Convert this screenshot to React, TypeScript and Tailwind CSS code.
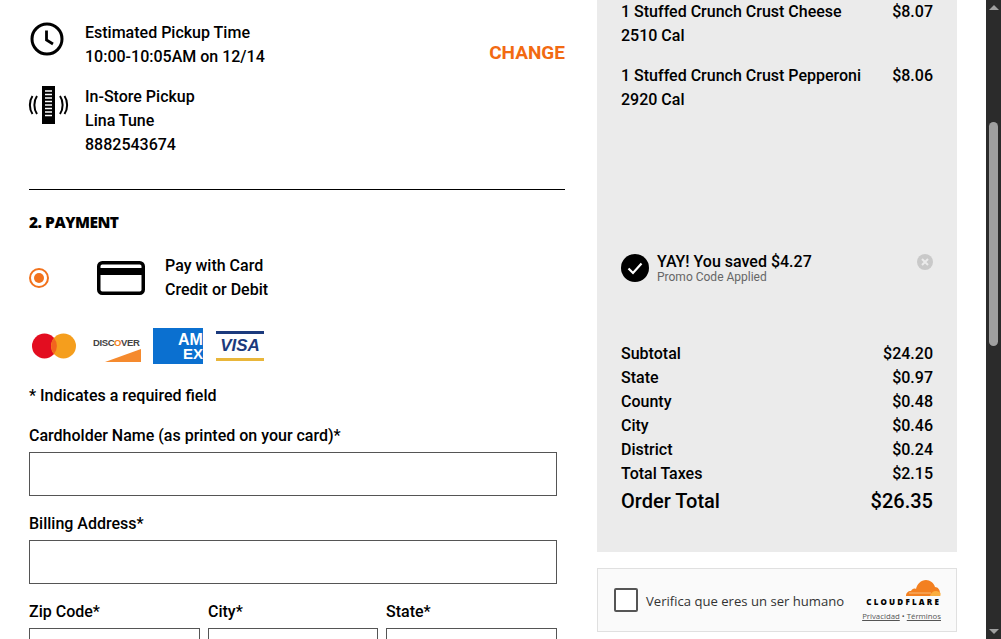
import React from "react";

const Row = ({ label, value }: { label: string; value: string }) => (
  <div className="flex justify-between h-6 leading-6">
    <span>{label}</span>
    <span>{value}</span>
  </div>
);

const Field = ({ label, className }: { label: string; className?: string }) => (
  <div className={className}>
    <div className="h-6 leading-6">{label}</div>
    <div className="mt-1 h-11 border border-[#555] bg-white" />
  </div>
);

const ClockIcon = () => (
  <svg width="36" height="36" viewBox="0 0 36 36" fill="none" stroke="#000" strokeWidth="3">
    <circle cx="18" cy="18" r="15" />
    <path d="M17.5 9.5V19l6.5 4" strokeWidth="2.8" />
  </svg>
);

const PickupIcon = () => (
  <svg width="42" height="40" viewBox="0 0 42 40" fill="none">
    <rect x="14" y="1" width="13" height="38" fill="#000" />
    <path d="M17 6h7M17 9.500h7M17 13h7M17 16.500h7M17 20h7M17 23.500h7M17 27h7M17 30.500h7" stroke="#fff" strokeWidth="1.300" />
    <path d="M9 11c-3.500 5-3.500 13 0 18M4.500 11c-3.500 5-3.500 13 0 18M32 11c3.500 5 3.500 13 0 18M36.500 11c3.500 5 3.500 13 0 18" stroke="#000" strokeWidth="2" />
  </svg>
);

const CardIcon = () => (
  <svg width="48" height="34" viewBox="0 0 48 34" fill="none">
    <rect x="1.750" y="1.750" width="44.500" height="30.500" rx="3.500" stroke="#000" strokeWidth="3.500" />
    <rect x="2" y="7" width="44" height="7" fill="#000" />
  </svg>
);

const Mastercard = () => (
  <svg width="44" height="26" viewBox="0 0 44 26">
    <circle cx="12.500" cy="13" r="12.500" fill="#e30d20" />
    <circle cx="31.500" cy="13" r="12.500" fill="#f59e1d" />
    <path d="M22 5a12.500 12.500 0 0 1 0 16a12.500 12.500 0 0 1 0-16z" fill="#f2641e" />
  </svg>
);

const Discover = () => (
  <div className="w-[48px] h-[36px] relative">
    <span className="absolute left-0 top-[9px] text-[9.500px] leading-[12px] font-bold tracking-[-0.4px] text-[#444] font-['Liberation_Sans',sans-serif]">
      DISC<span className="text-[#f58220]">O</span>VER
    </span>
    <svg className="absolute left-[12px] top-[21px]" width="37" height="13" viewBox="0 0 37 13">
      <path d="M0 13 L36 0 V13 Z" fill="#f58a2e" />
    </svg>
  </div>
);

const Amex = () => (
  <div className="w-[50px] h-[36px] bg-[#0b70d0] overflow-hidden flex flex-col pl-[25px] pt-[5px] font-bold text-white whitespace-nowrap font-['Liberation_Sans',sans-serif]">
    <div className="text-[16px] leading-[14px] h-[14px]">AM</div>
    <div className="text-[15px] leading-[13px] h-[13px] ml-[5px]">EX</div>
  </div>
);

const Visa = () => (
  <div className="w-[48px] flex flex-col h-[30px]">
    <div className="h-1 bg-[#1b3a7d]" />
    <div className="flex-1 flex items-center justify-center text-[17px] italic font-bold text-[#1b3a7d] font-['Liberation_Sans',sans-serif]">
      VISA
    </div>
    <div className="h-[5px] bg-[#e9b63a]" />
  </div>
);

const CloudflareLogo = () => (
  <svg width="36" height="18" viewBox="0 0 36 18">
    <path d="M1 17c0-3 2-5 5-5 1-2 3-3 5-2 1-5 5-9 10-9 4 0 8 3 9 7 3 0 5 3 5 6 0 1 0 2-.3 3z" fill="#f38020" />
    <path d="M25 17c.6-3 3-5 6-5 2 0 3.500 1 4.500 2 .2 1 0 2-.2 3z" fill="#faae40" />
    <path d="M4 14h22" stroke="#fbd29f" strokeWidth=".7" />
  </svg>
);

export default function App() {
  return (
    <div className="h-[639px] w-[1001px] overflow-hidden flex bg-white text-black text-base leading-6 font-['Roboto',sans-serif] font-medium">
      {/* Main form column */}
      <div className="ml-[29px] w-[536px] pt-[21px] shrink-0">
        <div className="flex justify-between">
          <div className="flex">
            <div className="w-[56px]">
              <ClockIcon />
            </div>
            <div>
              <div>Estimated Pickup Time</div>
              <div>10:00-10:05AM on 12/14</div>
            </div>
          </div>
          <div className="text-[#f26a12] text-[19px] leading-6 font-bold self-end -translate-y-1">CHANGE</div>
        </div>

        <div className="flex mt-4">
          <div className="w-[56px] -ml-[1px] mr-[1px]">
            <PickupIcon />
          </div>
          <div>
            <div>In-Store Pickup</div>
            <div>Lina Tune</div>
            <div>8882543674</div>
          </div>
        </div>

        <div className="mt-8 border-t border-black" />

        <div className="mt-[20px] h-6 leading-6 font-['Open_Sans',sans-serif] text-[15.500px] font-extrabold tracking-[-0.5px]">2. PAYMENT</div>

        <div className="flex items-center mt-[20px] h-12">
          <div className="w-5 h-5 rounded-full border-2 border-[#f2721c] flex items-center justify-center">
            <div className="w-[10px] h-[10px] rounded-full bg-[#f2721c]" />
          </div>
          <div className="ml-[48px]">
            <CardIcon />
          </div>
          <div className="ml-[20px]">
            <div>Pay with Card</div>
            <div>Credit or Debit</div>
          </div>
        </div>

        <div className="flex items-center mt-[26px] ml-[3px] h-9">
          <Mastercard />
          <div className="ml-[17px]">
            <Discover />
          </div>
          <div className="ml-[12px]">
            <Amex />
          </div>
          <div className="ml-[13px]">
            <Visa />
          </div>
        </div>

        <div className="mt-[20px] h-6">* Indicates a required field</div>

        <div className="w-[528px]">
          <Field label="Cardholder Name (as printed on your card)*" className="mt-4" />
          <Field label="Billing Address*" className="mt-4" />
          <div className="mt-4 flex gap-2">
            <Field label="Zip Code*" className="w-[171px]" />
            <Field label="City*" className="w-[170px]" />
            <Field label="State*" className="w-[171px]" />
          </div>
        </div>
      </div>

      {/* Order summary column */}
      <div className="ml-[32px] w-[360px] shrink-0">
        <div className="h-[552px] bg-[#ebebeb] px-6 flex flex-col">
          <div className="flex justify-between">
            <div>
              <div>1 Stuffed Crunch Crust Cheese</div>
              <div>2510 Cal</div>
            </div>
            <div>$8.07</div>
          </div>
          <div className="flex justify-between mt-4">
            <div>
              <div>1 Stuffed Crunch Crust Pepperoni</div>
              <div>2920 Cal</div>
            </div>
            <div>$8.06</div>
          </div>

          <div className="flex mt-[139px] h-8">
            <svg width="28" height="28" viewBox="0 0 28 28" className="mt-[3px]">
              <circle cx="14" cy="14" r="14" fill="#000" />
              <path d="M7.500 14.500l4.500 4.500 8.500-9.500" stroke="#fff" strokeWidth="2.200" fill="none" />
            </svg>
            <div className="ml-2 flex-1">
              <div className="leading-[18px] mt-[2px]">YAY! You saved $4.27</div>
              <div className="text-xs leading-[12px] text-[#666] font-[450]">Promo Code Applied</div>
            </div>
            <svg width="16" height="16" viewBox="0 0 16 16" className="mt-[3px]">
              <circle cx="8" cy="8" r="8" fill="#c9c9c9" />
              <path d="M5 5l6 6M11 5l-6 6" stroke="#ebebeb" strokeWidth="2" />
            </svg>
          </div>

          <div className="mt-[59px]">
            <Row label="Subtotal" value="$24.20" />
            <Row label="State" value="$0.97" />
            <Row label="County" value="$0.48" />
            <Row label="City" value="$0.46" />
            <Row label="District" value="$0.24" />
            <Row label="Total Taxes" value="$2.15" />
            <div className="flex justify-between text-xl font-medium leading-[30px]">
              <span>Order Total</span>
              <span>$26.35</span>
            </div>
          </div>
        </div>

        {/* Turnstile widget */}
        <div className="mt-4 h-[64px] border border-[#e0e0e0] bg-[#fafafa] flex items-center pl-4 pr-[15px] font-['Open_Sans',sans-serif] font-normal">
          <div className="w-6 h-6 rounded-[2px] border-2 border-[#555] bg-white shrink-0" />
          <div className="ml-2 mt-[2px] text-[13.100px] text-[#333] flex-1 whitespace-nowrap">Verifica que eres un ser humano</div>
          <div className="flex flex-col items-end">
            <CloudflareLogo />
            <div className="text-[8px] leading-[10px] font-extrabold tracking-[2.200px] text-black whitespace-nowrap">CLOUDFLARE</div>
            <div className="text-[7.800px] leading-[10px] mt-[4px] text-[#555] whitespace-nowrap">
              <span className="underline">Privacidad</span> • <span className="underline">Términos</span>
            </div>
          </div>
        </div>
      </div>

      {/* Scrollbar */}
      <div className="ml-auto w-[15px] h-full bg-[#2b2b2b] flex flex-col items-center shrink-0">
        <div className="mt-[5px] w-0 h-0 border-x-[5px] border-x-transparent border-b-[5px] border-b-[#a0a0a0]" />
        <div className="mt-[112px] w-[9px] h-[224px] rounded-full bg-[#9f9f9f]" />
        <div className="mt-auto mb-[5px] w-0 h-0 border-x-[5px] border-x-transparent border-t-[5px] border-t-[#a0a0a0]" />
      </div>
    </div>
  );
}
